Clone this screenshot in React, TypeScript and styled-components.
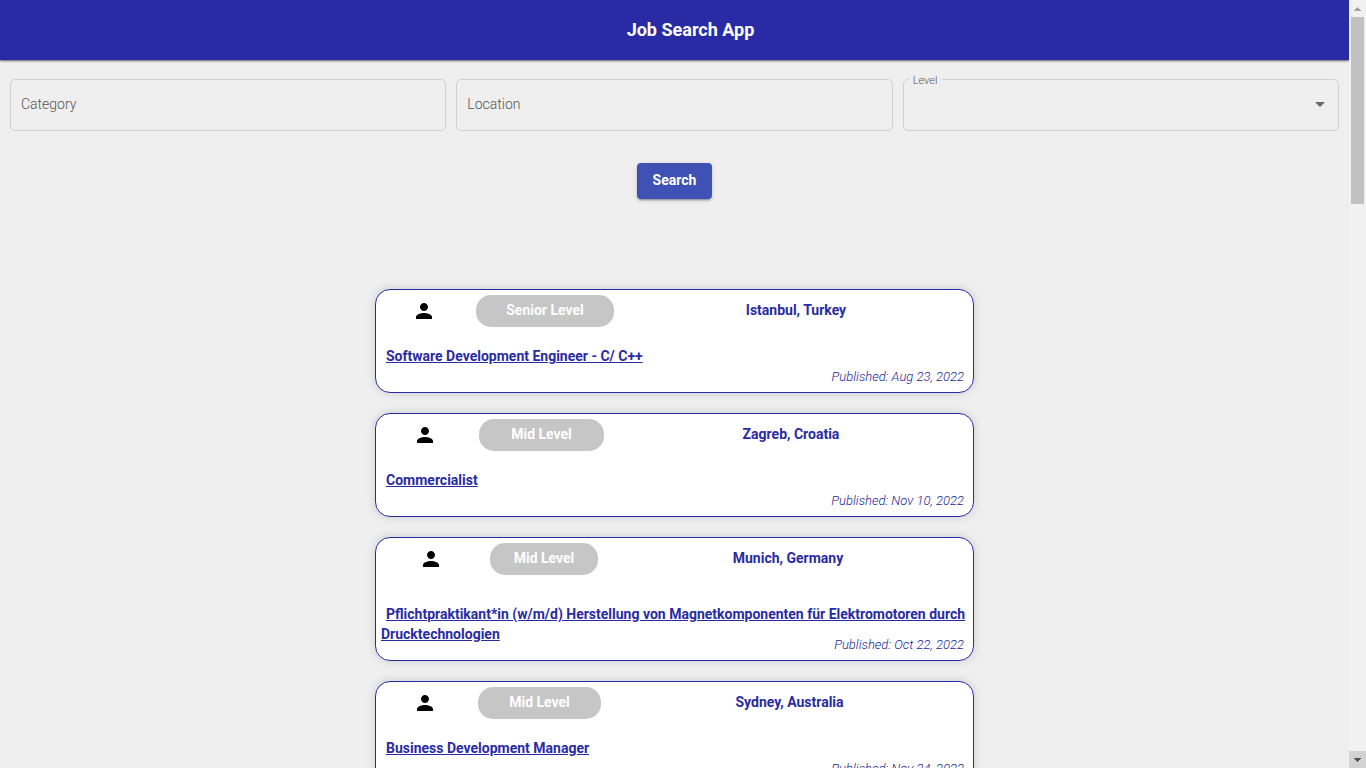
import React from "react";
import styled, { createGlobalStyle } from "styled-components";

const navy = "#292ba4";

const GlobalStyle = createGlobalStyle`
  *, *::before, *::after { box-sizing: border-box; }
  body {
    margin: 0;
    background: #efefef;
    font-family: Roboto, "Liberation Sans", sans-serif;
    font-size: 14px;
    line-height: 20px;
    font-weight: 300;
  }
`;

const Shell = styled.div`
  display: grid;
  grid-template-columns: minmax(0, 1fr) 17px;
  height: 100vh;
  overflow: hidden;
`;

const Page = styled.div`
  overflow: hidden;
`;

const Toolbar = styled.header`
  display: flex;
  align-items: center;
  justify-content: center;
  height: 60px;
  padding-left: 32px;
  background: ${navy};
  color: #fff;
  box-shadow: 0 1px 2px rgba(0, 0, 0, 0.6);
`;

const AppTitle = styled.h1`
  margin: 0;
  font-size: 18px;
  line-height: 24px;
  font-weight: 700;
`;

const SearchForm = styled.form`
  display: flex;
  flex-direction: column;
  align-items: center;
  gap: 32px;
  padding: 19px 10px 0;
`;

const Fields = styled.div`
  display: grid;
  grid-template-columns: repeat(3, minmax(0, 1fr));
  gap: 10px;
  width: 100%;
`;

const TextInput = styled.input`
  height: 52px;
  padding: 0 10px 2px;
  border: 1px solid #d0d0d0;
  border-radius: 5px;
  background: transparent;
  color: #222;
  font: inherit;
  outline: none;
  &::placeholder {
    color: #555;
    opacity: 1;
  }
`;

const Outline = styled.fieldset`
  position: relative;
  min-width: 0;
  height: 57px;
  margin: -5px 0 0;
  padding: 0 5px;
  border: 1px solid #d0d0d0;
  border-radius: 5px;
`;

const OutlineLegend = styled.legend`
  height: 11px;
  padding: 0 5px 0 4px;
  color: #555;
  font-size: 11px;
  line-height: 13px;
`;

const LevelSelect = styled.select`
  display: block;
  width: 100%;
  height: 38px;
  border: 0;
  background: transparent;
  appearance: none;
  font: inherit;
  outline: none;
`;

const Caret = styled.svg`
  position: absolute;
  right: 13px;
  bottom: 23px;
  pointer-events: none;
`;

const SearchButton = styled.button`
  height: 36px;
  padding: 0 16px 2px;
  border: 0;
  border-radius: 4px;
  background: #3f51b5;
  color: #fff;
  font: inherit;
  font-weight: 700;
  box-shadow: 0 3px 1px -2px rgba(0, 0, 0, 0.2), 0 2px 2px rgba(0, 0, 0, 0.14),
    0 1px 5px rgba(0, 0, 0, 0.12);
`;

const JobList = styled.main`
  display: flex;
  flex-direction: column;
  gap: 20px;
  width: 100%;
  max-width: 599px;
  margin: 90px auto 0;
`;

const Card = styled.article`
  padding: 5px;
  border: 1px solid ${navy};
  border-radius: 15px;
  background: #fff;
  color: ${navy};
  box-shadow: 0 0 10px rgba(0, 0, 0, 0.15);
`;

const CardHead = styled.div<{ $columns: string }>`
  display: grid;
  grid-template-columns: ${(p) => p.$columns};
  gap: 10px;
  justify-items: center;
  align-items: center;
  height: 32px;
`;

const LevelPill = styled.span`
  width: 100%;
  padding-bottom: 2px;
  border-radius: 15px;
  background: #c6c6c6;
  color: #fff;
  font-weight: 700;
  line-height: 30px;
  text-align: center;
`;

const Place = styled.span`
  padding-bottom: 2px;
  font-weight: 700;
`;

const CardBody = styled.div<{ $twoLines: boolean }>`
  display: grid;
  align-items: center;
  padding-top: ${(p) => (p.$twoLines ? 20 : 0)}px;
`;

const JobTitle = styled.h2`
  grid-area: 1 / 1;
  margin: 0 0 2px;
  font-size: 14px;
  line-height: 20px;
  font-weight: 700;
`;

const JobLink = styled.a`
  margin: 0 0 0 5px;
  color: inherit;
  text-decoration: underline;
`;

const Published = styled.p`
  grid-area: 1 / 1;
  justify-self: end;
  margin: 0;
  padding: 40px 4px 0 0;
  color: #1c1e96;
  font-size: 13px;
  line-height: 20px;
  font-style: italic;
  pointer-events: none;
`;

const ScrollTrack = styled.div`
  display: grid;
  grid-template-rows: 17px 1fr 17px;
  background: #f1f1f1;
`;

const ScrollArrow = styled.div<{ $active?: boolean }>`
  display: grid;
  place-items: center;
  background: ${(p) => (p.$active ? "#d2d2d2" : "transparent")};
`;

const ScrollThumb = styled.div`
  height: 187px;
  margin: 0 2px;
  background: #c1c1c1;
`;

const jobs = [
  { level: "Senior Level", place: "Istanbul, Turkey", title: "Software Development Engineer - C/ C++", date: "Aug 23, 2022", columns: "85fr 138fr 344fr" },
  { level: "Mid Level", place: "Zagreb, Croatia", title: "Commercialist", date: "Nov 10, 2022", columns: "88fr 125fr 354fr" },
  { level: "Mid Level", place: "Munich, Germany", title: "Pflichtpraktikant*in (w/m/d) Herstellung von Magnetkomponenten für Elektromotoren durch Drucktechnologien", date: "Oct 22, 2022", columns: "99fr 108fr 360fr", twoLines: true },
  { level: "Mid Level", place: "Sydney, Australia", title: "Business Development Manager", date: "Nov 24, 2022", columns: "87fr 123fr 357fr" },
];

function PersonIcon() {
  return (
    <svg width="24" height="24" viewBox="0 0 24 24" fill="#000" aria-hidden="true">
      <path d="M12 12c2.21 0 4-1.79 4-4s-1.79-4-4-4-4 1.79-4 4 1.79 4 4 4zm0 2c-2.67 0-8 1.34-8 4v2h16v-2c0-2.66-5.33-4-8-4z" />
    </svg>
  );
}

export default function App() {
  return (
    <>
      <GlobalStyle />
      <Shell>
        <Page>
          <Toolbar>
            <AppTitle>Job Search App</AppTitle>
          </Toolbar>
          <SearchForm onSubmit={(e) => e.preventDefault()}>
            <Fields>
              <TextInput type="text" placeholder="Category" aria-label="Category" />
              <TextInput type="text" placeholder="Location" aria-label="Location" />
              <Outline>
                <OutlineLegend>
                  <label htmlFor="level">Level</label>
                </OutlineLegend>
                <LevelSelect id="level" defaultValue="">
                  <option value="" />
                </LevelSelect>
                <Caret width="10" height="5" viewBox="0 0 10 5" aria-hidden="true">
                  <path d="M0 0h10L5 5z" fill="#6a6a6a" />
                </Caret>
              </Outline>
            </Fields>
            <SearchButton type="submit">Search</SearchButton>
          </SearchForm>
          <JobList>
            {jobs.map((job) => (
              <Card key={job.title}>
                <CardHead $columns={job.columns}>
                  <PersonIcon />
                  <LevelPill>{job.level}</LevelPill>
                  <Place>{job.place}</Place>
                </CardHead>
                <CardBody $twoLines={Boolean(job.twoLines)}>
                  <JobTitle>
                    <JobLink href="#">{job.title}</JobLink>
                  </JobTitle>
                  <Published>Published: {job.date}</Published>
                </CardBody>
              </Card>
            ))}
          </JobList>
        </Page>
        <ScrollTrack aria-hidden="true">
          <ScrollArrow>
            <svg width="7" height="4" viewBox="0 0 7 4">
              <path d="M3 0h1v1h1v1h1v1h1v1H0V3h1V2h1V1h1z" fill="#a3a3a3" />
            </svg>
          </ScrollArrow>
          <ScrollThumb />
          <ScrollArrow $active>
            <svg width="7" height="4" viewBox="0 0 7 4">
              <path d="M0 0h7v1H6v1H5v1H4v1H3V3H2V2H1V1H0z" fill="#505050" />
            </svg>
          </ScrollArrow>
        </ScrollTrack>
      </Shell>
    </>
  );
}
